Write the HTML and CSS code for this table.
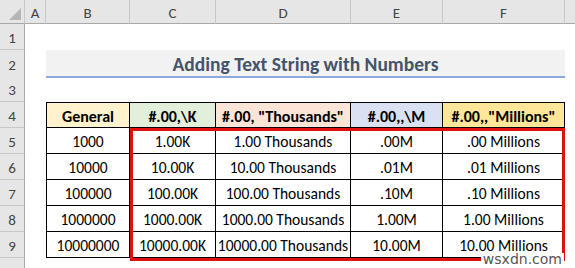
FILE: index.html
```html
<!DOCTYPE html>
<html>
<head>
<meta charset="utf-8">
<link rel="stylesheet" href="styles.css">
</head>
<body>
<div class="sheet">
  <div class="row colhead">
    <div class="corner"><span class="tri"></span></div>
    <div class="ch">A</div>
    <div class="ch">B</div>
    <div class="ch">C</div>
    <div class="ch">D</div>
    <div class="ch">E</div>
    <div class="ch">F</div>
    <div class="ch last"></div>
  </div>

  <div class="row"><div class="rh">1</div></div>

  <div class="row">
    <div class="rh">2</div>
    <div class="blank"></div>
    <div class="title">Adding Text String with Numbers</div>
  </div>

  <div class="row"><div class="rh">3</div></div>

  <div class="row">
    <div class="rh">4</div>
    <div class="blank"></div>
    <div class="hd c-b first">General</div>
    <div class="hd c-c">#.00,\K</div>
    <div class="hd c-d">#.00, "Thousands"</div>
    <div class="hd c-e">#.00,,\M</div>
    <div class="hd c-f">#.00,,"Millions"</div>
  </div>

  <div class="row">
    <div class="rh">5</div>
    <div class="blank"></div>
    <div class="td first">1000</div>
    <div class="td">1.00K</div>
    <div class="td">1.00 Thousands</div>
    <div class="td">.00M</div>
    <div class="td">.00 Millions</div>
  </div>

  <div class="row">
    <div class="rh">6</div>
    <div class="blank"></div>
    <div class="td first">10000</div>
    <div class="td">10.00K</div>
    <div class="td">10.00 Thousands</div>
    <div class="td">.01M</div>
    <div class="td">.01 Millions</div>
  </div>

  <div class="row">
    <div class="rh">7</div>
    <div class="blank"></div>
    <div class="td first">100000</div>
    <div class="td">100.00K</div>
    <div class="td">100.00 Thousands</div>
    <div class="td">.10M</div>
    <div class="td">.10 Millions</div>
  </div>

  <div class="row">
    <div class="rh">8</div>
    <div class="blank"></div>
    <div class="td first">1000000</div>
    <div class="td">1000.00K</div>
    <div class="td">1000.00 Thousands</div>
    <div class="td">1.00M</div>
    <div class="td">1.00 Millions</div>
  </div>

  <div class="row">
    <div class="rh">9</div>
    <div class="blank"></div>
    <div class="td first">10000000</div>
    <div class="td">10000.00K</div>
    <div class="td">10000.00 Thousands</div>
    <div class="td">10.00M</div>
    <div class="td">10.00 Millions</div>
  </div>

  <div class="row short"><div class="rh"></div></div>

  <div class="highlight"></div>
  <div class="watermark">wsxdn.com</div>
</div>
</body>
</html>
```
FILE: styles.css
```css
html, body {
  margin: 0;
  padding: 0;
  background: #fff;
}
.sheet {
  position: relative;
  width: 575px;
  height: 268px;
  overflow: hidden;
  display: flex;
  flex-direction: column;
  font-family: Carlito, Calibri, Lato, "Open Sans", sans-serif;
  font-size: 15.5px;
  color: #000;
}
.row {
  display: grid;
  grid-template-columns: 25px 21px 84px 86px 135px 92px 122px 10px;
  height: 26px;
  flex: none;
}
.row.colhead { height: 24px; }
.row.short { height: 10px; }

.corner, .ch, .rh {
  background: #e6e6e6;
  box-sizing: border-box;
  color: #444;
  font-size: 15px;
  display: flex;
  align-items: center;
  justify-content: center;
}
.corner {
  border-right: 1px solid #c8c8c8;
  border-bottom: 1px solid #a8a8a8;
  position: relative;
}
.tri {
  position: absolute;
  right: 3px;
  bottom: 3px;
  width: 0;
  height: 0;
  border-left: 12px solid transparent;
  border-bottom: 12px solid #b5b5b5;
}
.ch {
  border-right: 1px solid #c8c8c8;
  border-bottom: 1px solid #a8a8a8;
  padding-top: 2px;
}
.ch.last { border-right: none; }
.rh {
  border-right: 1px solid #a8a8a8;
  border-bottom: 1px solid #c8c8c8;
  padding-top: 3px;
}
.short .rh { border-bottom: none; }

.title {
  grid-column: 3 / 8;
  background: #f2f2f2;
  border-bottom: 2px solid #8ea9db;
  box-sizing: border-box;
  display: flex;
  align-items: center;
  justify-content: center;
  font-weight: bold;
  font-size: 19.5px;
  color: #44546a;
  padding-top: 2px;
}

.hd, .td {
  box-sizing: border-box;
  border-right: 1px solid #000;
  border-bottom: 1px solid #000;
  display: flex;
  align-items: center;
  justify-content: center;
  white-space: nowrap;
  padding-top: 2px;
}
.hd {
  border-top: 1px solid #000;
  font-weight: bold;
  font-size: 16px;
}
.first { border-left: 1px solid #000; }
.c-b { background: #fff2cc; }
.c-c { background: #e2efda; }
.c-d { background: #fce4d6; }
.c-e { background: #d9e1f2; }
.c-f { background: #ffe699; }

.highlight {
  position: absolute;
  left: 130px;
  top: 128px;
  width: 435px;
  height: 133px;
  box-sizing: border-box;
  border: 3px solid #e01010;
  pointer-events: none;
}
.watermark {
  position: absolute;
  right: 11px;
  bottom: 2px;
  background: #fff;
  color: #555;
  font-family: "DejaVu Sans", sans-serif;
  font-size: 14px;
  line-height: 13px;
  padding: 0 2px;
}
```
